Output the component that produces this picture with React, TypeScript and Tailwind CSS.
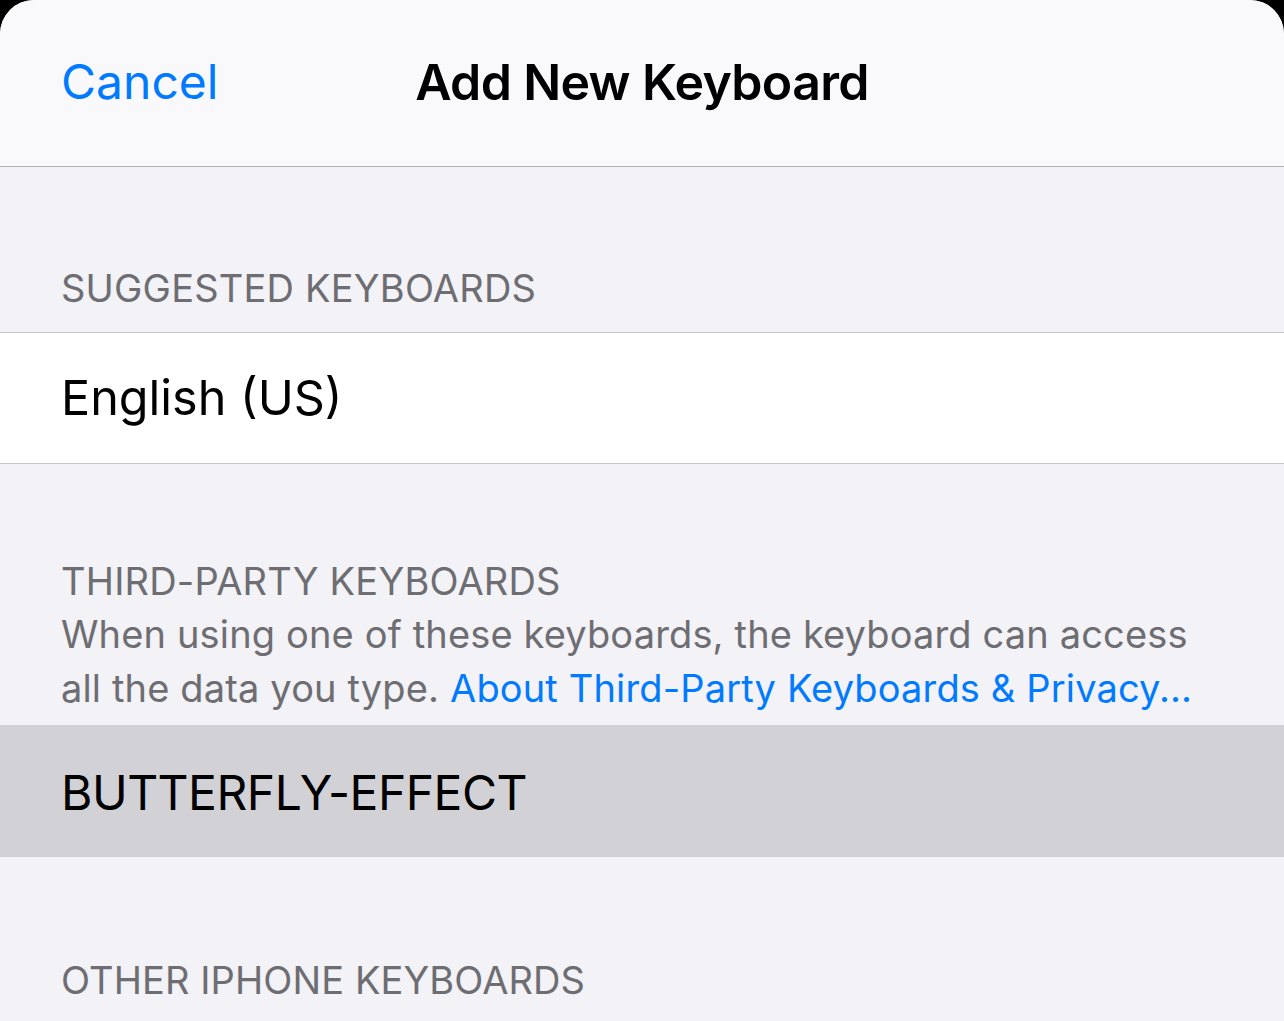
import React from "react";

const font = { fontFamily: "Inter, 'Noto Sans', sans-serif" };

export default function App() {
  return (
    <div className="w-[1284px] h-[1021px] bg-black overflow-hidden" style={font}>
      <div className="w-full h-full rounded-t-[34px] overflow-hidden bg-[#f2f2f7] flex flex-col">
        <div className="h-[167px] shrink-0 bg-[#f9f9fb] border-b border-[#b4b4b8] relative flex items-center">
          <div className="pl-[61px] pb-[2px] text-[48px] text-[#007aff]">Cancel</div>
          <div className="absolute left-0 right-0 top-0 h-full flex items-center justify-center pb-[2px]">
            <div className="text-[50px] font-semibold text-black tracking-[-0.65px]">Add New Keyboard</div>
          </div>
        </div>
        <div className="h-[165px] shrink-0 flex items-end pl-[61px] pb-[25px]">
          <div className="text-[38px] text-[#6d6d72] leading-none tracking-[0.2px]">SUGGESTED KEYBOARDS</div>
        </div>
        <div className="h-[132px] shrink-0 bg-white border-y border-[#c6c6c8] flex items-center pl-[61px]">
          <div className="text-[48.5px] text-black leading-none">English (US)</div>
        </div>
        <div className="h-[261px] shrink-0 flex flex-col justify-end pl-[61px] pb-[10px]">
          <div className="text-[38px] text-[#6d6d72] leading-[52px] tracking-[0.2px]">THIRD-PARTY KEYBOARDS</div>
          <div className="text-[38px] text-[#6d6d72] leading-[54px] tracking-[0.15px]">
            When using one of these keyboards, the keyboard can access
          </div>
          <div className="flex text-[38px] leading-[54px] tracking-[0.15px] whitespace-pre">
            <span className="text-[#6d6d72]">all the data you type. </span>
            <span className="text-[#007aff]">About Third-Party Keyboards &amp; Privacy...</span>
          </div>
        </div>
        <div className="h-[132px] shrink-0 bg-[#d1d1d6] flex items-center pl-[61px]">
          <div className="text-[48px] text-black leading-none tracking-[-0.5px] pt-[4px]">BUTTERFLY-EFFECT</div>
        </div>
        <div className="h-[164px] shrink-0 flex items-end pl-[61px] pb-[22px]">
          <div className="text-[38px] text-[#6d6d72] leading-none tracking-[0.1px]">OTHER IPHONE KEYBOARDS</div>
        </div>
      </div>
    </div>
  );
}
